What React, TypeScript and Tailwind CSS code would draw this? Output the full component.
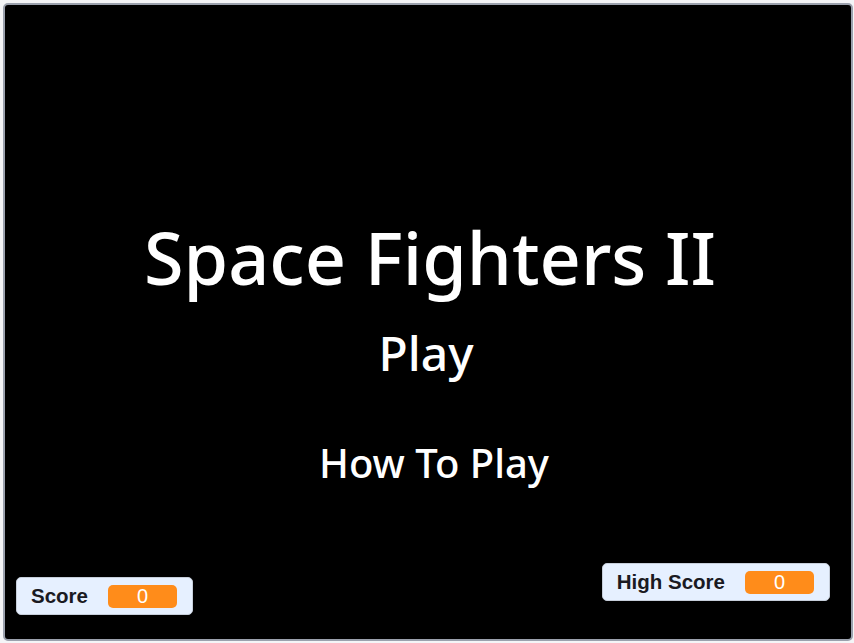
import React from "react";

function Monitor({ label, value }: { label: string; value: string }) {
  return (
    <div className="flex items-center h-[38px] rounded-[5px] border border-[#c6ceda] bg-[#e6f0ff] pl-[14px] pr-[15px] gap-[20px]">
      <span
        className="text-[20.5px] font-bold text-[#1a1a22] leading-none"
        style={{ fontFamily: '"Liberation Sans", Arial, sans-serif' }}
      >
        {label}
      </span>
      <span
        className="flex items-center justify-center w-[69px] h-[23px] rounded-[5px] bg-[#ff8c1a] text-white text-[20px] leading-none"
        style={{ fontFamily: '"Liberation Sans", Arial, sans-serif' }}
      >
        {value}
      </span>
    </div>
  );
}

export default function App() {
  return (
    <div className="w-[854px] h-[643px] bg-[#f4f5f7] pt-[3px] pl-[3px]">
      <div className="w-[850px] h-[638px] rounded-[5px] border-2 border-[#9ba1ad] bg-black flex flex-col">
        <div
          className="flex flex-col items-center text-white font-medium"
          style={{ fontFamily: '"Noto Sans", "Open Sans", sans-serif' }}
        >
          <div className="mt-[216px] text-[72px] leading-none pl-[4px]">Space Fighters II</div>
          <div className="mt-[36px] text-[48px] leading-none pr-[4px]">Play</div>
          <div className="mt-[66px] text-[40px] leading-none pl-[12px]">How To Play</div>
        </div>
        <div className="mt-[80px] flex justify-between items-start pl-[11px] pr-[21px]">
          <div className="mt-[14px]">
            <Monitor label="Score" value="0" />
          </div>
          <Monitor label="High Score" value="0" />
        </div>
      </div>
    </div>
  );
}
